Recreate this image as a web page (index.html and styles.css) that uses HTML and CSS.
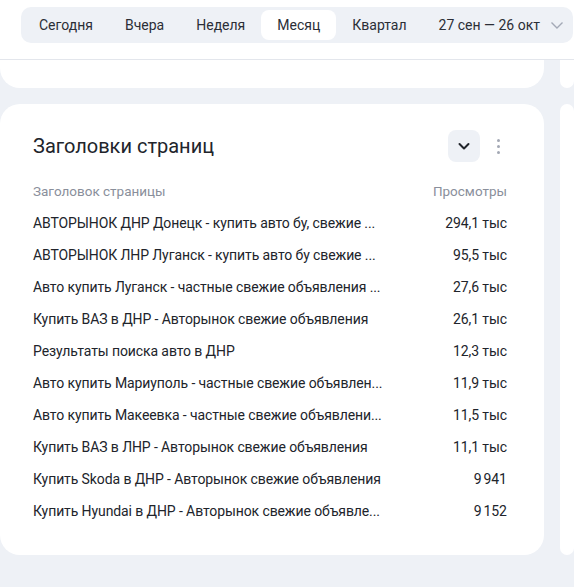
FILE: index.html
```html
<!DOCTYPE html>
<html lang="ru">
  <head>
    <meta charset="UTF-8" />
    <meta name="viewport" content="width=device-width, initial-scale=1.0" />
    <title>Заголовки страниц</title>
    <link rel="stylesheet" href="styles.css">
  </head>
  <body>
    <header class="topbar">
      <nav class="periods">
        <span class="period">Сегодня</span>
        <span class="period">Вчера</span>
        <span class="period">Неделя</span>
        <span class="period period-active">Месяц</span>
        <span class="period">Квартал</span>
        <span class="period period-range">
          27 сен — 26 окт
          <svg class="range-arrow" width="14" height="14" viewBox="0 0 14 14">
            <path d="M1.5 4.5 L7 10 L12.5 4.5" fill="none" stroke="#a3a9b6" stroke-width="1.4" />
          </svg>
        </span>
      </nav>
    </header>

    <main class="grid">
      <div class="card card-stub"></div>
      <div class="card card-stub"></div>

      <section class="card widget">
        <div class="widget-head">
          <h2>Заголовки страниц</h2>
          <div class="widget-tools">
            <button class="icon-button" aria-label="Свернуть">
              <svg width="14" height="14" viewBox="0 0 14 14">
                <path d="M2.5 5 L7 9.5 L11.5 5" fill="none" stroke="#21242b" stroke-width="2" stroke-linecap="round" stroke-linejoin="round" />
              </svg>
            </button>
            <span class="kebab">
              <i></i><i></i><i></i>
            </span>
          </div>
        </div>

        <table class="report">
          <thead>
            <tr>
              <th>Заголовок страницы</th>
              <th class="num">Просмотры</th>
            </tr>
          </thead>
          <tbody>
            <tr><td>АВТОРЫНОК ДНР Донецк - купить авто бу, свежие ...</td><td class="num">294,1 тыс</td></tr>
            <tr><td>АВТОРЫНОК ЛНР Луганск - купить авто бу свежие ...</td><td class="num">95,5 тыс</td></tr>
            <tr><td>Авто купить Луганск - частные свежие объявления ...</td><td class="num">27,6 тыс</td></tr>
            <tr><td>Купить ВАЗ в ДНР - Авторынок свежие объявления</td><td class="num">26,1 тыс</td></tr>
            <tr><td>Результаты поиска авто в ДНР</td><td class="num">12,3 тыс</td></tr>
            <tr><td>Авто купить Мариуполь - частные свежие объявлен...</td><td class="num">11,9 тыс</td></tr>
            <tr><td>Авто купить Макеевка - частные свежие объявлени...</td><td class="num">11,5 тыс</td></tr>
            <tr><td>Купить ВАЗ в ЛНР - Авторынок свежие объявления</td><td class="num">11,1 тыс</td></tr>
            <tr><td>Купить Skoda в ДНР - Авторынок свежие объявления</td><td class="num">9&#8239;941</td></tr>
            <tr><td>Купить Hyundai в ДНР - Авторынок свежие объявле...</td><td class="num">9&#8239;152</td></tr>
          </tbody>
        </table>
      </section>
      <div class="card card-side"></div>
    </main>
  </body>
</html>
```

FILE: styles.css
```css
* {
  margin: 0;
  padding: 0;
  box-sizing: border-box;
}

body {
  font-family: Roboto, "Noto Sans", Arial, sans-serif;
  color: #21242b;
  background-color: #eef1f6;
  overflow: hidden;
}

.topbar {
  height: 60px;
  padding: 7px 0 0 21px;
  background-color: #fff;
  border-bottom: 1px solid #e3e6ec;
}

.periods {
  display: flex;
  align-items: center;
  width: 552px;
  height: 36px;
  padding: 0 2px;
  background-color: #eef1f6;
  border-radius: 10px;
}

.period {
  display: flex;
  align-items: center;
  height: 30px;
  padding: 0 16px;
  font-size: 14px;
  color: #2b2e36;
  white-space: nowrap;
  border-radius: 8px;
}

.period-active {
  background-color: #fff;
}

.period-range {
  gap: 10px;
}

.grid {
  display: grid;
  grid-template-columns: 544px 1fr;
  gap: 16px;
}

.card {
  background-color: #fff;
  border-radius: 20px;
}

.card-stub {
  height: 28px;
  border-top-left-radius: 0;
  border-top-right-radius: 0;
}

.widget {
  height: 451px;
  padding: 26px 37px 0 33px;
}

.widget-head {
  display: flex;
  justify-content: space-between;
  align-items: center;
  height: 32px;
  margin-bottom: 13px;
}

.widget-head h2 {
  font-size: 20px;
  font-weight: 400;
}

.widget-tools {
  display: flex;
  align-items: center;
  gap: 10px;
  margin-right: 1px;
}

.icon-button {
  display: flex;
  align-items: center;
  justify-content: center;
  width: 32px;
  height: 32px;
  background-color: #eef1f6;
  border: none;
  border-radius: 8px;
}

.kebab {
  display: flex;
  flex-direction: column;
  align-items: center;
  gap: 3px;
  width: 16px;
}

.kebab i {
  display: block;
  width: 3px;
  height: 3px;
  border-radius: 50%;
  background-color: #a3a8b4;
}

.report {
  width: 100%;
  border-collapse: collapse;
  font-size: 14px;
  letter-spacing: -0.1px;
}

.report th,
.report td {
  height: 32px;
  padding: 0;
  text-align: left;
  white-space: nowrap;
}

.report th {
  font-size: 13.5px;
  font-weight: 400;
  color: #8a8f9b;
  letter-spacing: 0;
}

.report .num {
  text-align: right;
}
```
